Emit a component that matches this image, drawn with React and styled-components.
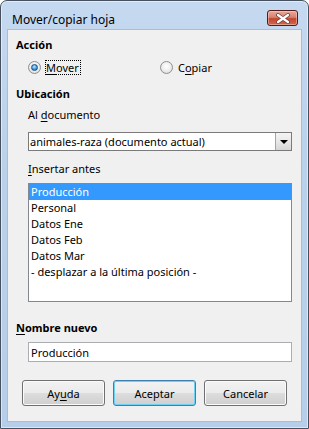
import React from "react"
import styled, { createGlobalStyle } from "styled-components"

const GlobalStyle = createGlobalStyle`
  html, body {
    margin: 0;
    padding: 0;
    background: #ffffff;
  }
  body {
    font-family: "Noto Sans", "Open Sans", sans-serif;
    font-size: 11px;
    color: #000000;
  }
`

const Window = styled.div`
  box-sizing: border-box;
  width: 309px;
  height: 429px;
  display: flex;
  flex-direction: column;
  padding: 0 7px 7px;
  border: 1px solid #46505e;
  border-radius: 7px 7px 0 0;
  background: linear-gradient(to bottom, #c5d9f0, #bad1ea 40%, #b6cee9);
  box-shadow: inset 0 0 0 1px rgba(255, 255, 255, 0.5);
`

const TitleBar = styled.div`
  display: flex;
  justify-content: space-between;
  align-items: flex-start;
  height: 29px;
  padding: 0 3px 0 4px;
`

const Title = styled.span`
  margin-top: 11px;
  font-size: 12px;
  line-height: 16px;
`

const CloseButton = styled.div`
  box-sizing: border-box;
  width: 31px;
  height: 16px;
  margin-top: 9px;
  display: flex;
  align-items: center;
  justify-content: center;
  border: 1px solid #4f1d1d;
  border-radius: 3px;
  background: linear-gradient(to bottom, #e9a99b 0%, #d7826f 45%, #c4452f 55%, #cf6a4f 100%);
  box-shadow: inset 0 0 0 1px rgba(255, 220, 210, 0.45);
`

const Client = styled.div`
  flex: 1;
  display: flex;
  flex-direction: column;
  padding: 7px 9px 0 8px;
  background: #f0f0f0;
  box-shadow: 0 0 0 1px #a8bed8;
`

const SectionLabel = styled.div`
  margin-top: ${p => p.$gap || 0}px;
  font-weight: 700;
  line-height: 16px;
`

const Indent = styled.div`
  display: flex;
  flex-direction: column;
  margin-left: 12px;
`

const RadioRow = styled.div`
  display: grid;
  grid-template-columns: 132px 1fr;
  height: 16px;
  margin: 6px 0 0 12px;
`

const RadioOption = styled.label`
  display: flex;
  align-items: center;
  gap: 4px;
`

const RadioCircle = styled.span`
  box-sizing: border-box;
  width: 13px;
  height: 13px;
  display: flex;
  align-items: center;
  justify-content: center;
  border: 1px solid #8e8f8f;
  border-radius: 50%;
  background: radial-gradient(circle at 50% 40%, #ffffff 0%, #ececec 55%, #cfcfcf 100%);

  &::after {
    content: "";
    display: ${p => (p.$checked ? "block" : "none")};
    box-sizing: border-box;
    width: 7px;
    height: 7px;
    border-radius: 50%;
    border: 1px solid #1f4f86;
    background: radial-gradient(circle at 45% 35%, #bfe9ff 0%, #3b9be0 55%, #11599f 100%);
  }
`

const RadioLabel = styled.span`
  line-height: 13px;
  padding-right: 1px;
  border: 1px ${p => (p.$focused ? "dotted #000000" : "solid transparent")};
`

const FieldLabel = styled.div`
  margin-top: ${p => p.$gap || 0}px;
  line-height: 16px;
`

const Key = styled.span`
  text-decoration: underline;
  text-underline-offset: 2px;
`

const Combo = styled.div`
  box-sizing: border-box;
  height: 19px;
  margin-top: 9px;
  display: flex;
  border: 1px solid #7a7a7a;
  background: #ffffff;
`

const ComboText = styled.span`
  flex: 1;
  padding-left: 1px;
  line-height: 17px;
`

const ComboButton = styled.span`
  box-sizing: border-box;
  width: 16px;
  display: flex;
  align-items: center;
  justify-content: center;
  border-left: 1px solid #a5a5a5;
  background: linear-gradient(to bottom, #f4f4f4 0%, #e8e8e8 50%, #d6d6d6 100%);

  &::after {
    content: "";
    border-left: 4px solid transparent;
    border-right: 4px solid transparent;
    border-top: 4px solid #000000;
  }
`

const ListBox = styled.div`
  box-sizing: border-box;
  height: 119px;
  margin-top: 6px;
  border: 1px solid #828790;
  background: #ffffff;
`

const ListItem = styled.div`
  padding-left: 2px;
  line-height: 16px;
  background: ${p => (p.$selected ? "#3399ff" : "transparent")};
  color: ${p => (p.$selected ? "#ffffff" : "#000000")};
`

const TextInput = styled.input`
  box-sizing: border-box;
  height: 20px;
  margin: 6px 0 0;
  padding: 0 2px;
  border: 1px solid #abadb3;
  background: #ffffff;
  font: inherit;
  color: #000000;
  outline: none;
`

const ButtonRow = styled.div`
  display: flex;
  justify-content: center;
  gap: 8px;
  margin: 18px -9px 0 -8px;
`

const Button = styled.div`
  box-sizing: border-box;
  width: 83px;
  height: 26px;
  display: flex;
  align-items: center;
  justify-content: center;
  border: 1px solid ${p => (p.$default ? "#3c7fb1" : "#707070")};
  border-radius: 3px;
  background: linear-gradient(to bottom, #f2f2f2 0%, #ebebeb 50%, #dddddd 51%, #cfcfcf 100%);
  box-shadow: inset 0 0 0 1px ${p => (p.$default ? "#6fd0f5" : "#fbfbfb")};
`

const sheets = ["Producción", "Personal", "Datos Ene", "Datos Feb", "Datos Mar", "- desplazar a la última posición -"]

export default function App() {
  return (
    <>
      <GlobalStyle />
      <Window>
        <TitleBar>
          <Title>Mover/copiar hoja</Title>
          <CloseButton>
            <svg width="14" height="11" viewBox="0 0 14 11">
              <path
                d="M2 2 L12 9 M12 2 L2 9"
                stroke="#6a3a3a"
                strokeWidth="3.8"
                strokeLinecap="round"
              />
              <path
                d="M2 2 L12 9 M12 2 L2 9"
                stroke="#ffffff"
                strokeWidth="2.3"
                strokeLinecap="round"
              />
            </svg>
          </CloseButton>
        </TitleBar>
        <Client>
          <SectionLabel>Acción</SectionLabel>
          <RadioRow>
            <RadioOption>
              <RadioCircle $checked />
              <RadioLabel $focused>
                <Key>M</Key>over
              </RadioLabel>
            </RadioOption>
            <RadioOption>
              <RadioCircle />
              <RadioLabel>
                C<Key>o</Key>piar
              </RadioLabel>
            </RadioOption>
          </RadioRow>
          <SectionLabel $gap={11}>Ubicación</SectionLabel>
          <Indent>
            <FieldLabel $gap={5}>
              Al <Key>d</Key>ocumento
            </FieldLabel>
            <Combo>
              <ComboText>animales-raza (documento actual)</ComboText>
              <ComboButton />
            </Combo>
            <FieldLabel $gap={10}>
              <Key>I</Key>nsertar antes
            </FieldLabel>
            <ListBox>
              {sheets.map((name, idx) => (
                <ListItem key={name} $selected={idx === 0}>
                  {name}
                </ListItem>
              ))}
            </ListBox>
          </Indent>
          <SectionLabel $gap={18}>
            <Key>N</Key>ombre nuevo
          </SectionLabel>
          <Indent>
            <TextInput readOnly value="Producción" />
          </Indent>
          <ButtonRow>
            <Button>
              Ay<Key>u</Key>da
            </Button>
            <Button $default>Aceptar</Button>
            <Button>Cancelar</Button>
          </ButtonRow>
        </Client>
      </Window>
    </>
  )
}
